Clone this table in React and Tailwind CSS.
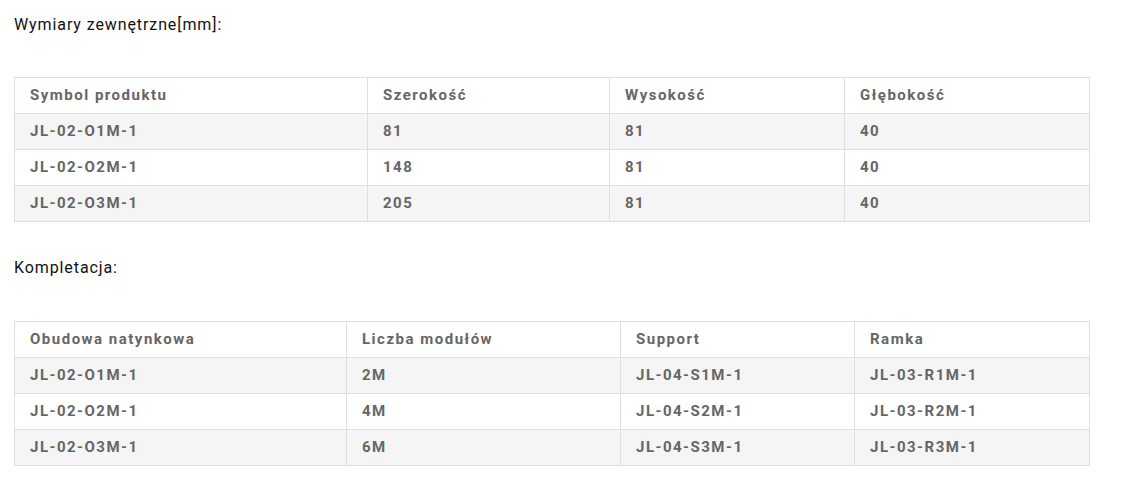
import React from 'react';

const dims = {
  cols: [
    { label: 'Symbol produktu', w: 'w-[353px]' },
    { label: 'Szerokość', w: 'w-[242px]' },
    { label: 'Wysokość', w: 'w-[235px]' },
    { label: 'Głębokość', w: 'w-[245px]' },
  ],
  rows: [
    ['JL-02-O1M-1', '81', '81', '40'],
    ['JL-02-O2M-1', '148', '81', '40'],
    ['JL-02-O3M-1', '205', '81', '40'],
  ],
};

const kit = {
  cols: [
    { label: 'Obudowa natynkowa', w: 'w-[332px]' },
    { label: 'Liczba modułów', w: 'w-[274px]' },
    { label: 'Support', w: 'w-[234px]' },
    { label: 'Ramka', w: 'w-[235px]' },
  ],
  rows: [
    ['JL-02-O1M-1', '2M', 'JL-04-S1M-1', 'JL-03-R1M-1'],
    ['JL-02-O2M-1', '4M', 'JL-04-S2M-1', 'JL-03-R2M-1'],
    ['JL-02-O3M-1', '6M', 'JL-04-S3M-1', 'JL-03-R3M-1'],
  ],
};

const SpecTable = ({ data }) => (
  <table className="w-[1076px] table-fixed border-collapse border border-[#dfdfdf] text-left">
    <thead>
      <tr>
        {data.cols.map((c) => (
          <th
            key={c.label}
            className={`${c.w} border border-[#dfdfdf] px-[15px] py-0 text-[15px] leading-[35px] font-bold tracking-[1.5px] text-[#666]`}
          >
            {c.label}
          </th>
        ))}
      </tr>
    </thead>
    <tbody>
      {data.rows.map((row, i) => (
        <tr key={i} className={i % 2 === 0 ? 'bg-[#f5f5f5]' : 'bg-white'}>
          {row.map((cell, j) => (
            <td
              key={j}
              className="border border-[#dfdfdf] px-[15px] py-0 text-[15px] leading-[35px] font-bold tracking-[1.5px] text-[#666]"
            >
              {cell}
            </td>
          ))}
        </tr>
      ))}
    </tbody>
  </table>
);

export default function App() {
  return (
    <div className="min-h-[495px] bg-white px-[14px] pt-[13px] font-['Roboto',sans-serif]">
      <p className="text-[16px] leading-[24px] tracking-[0.9px] text-[#111]">Wymiary zewnętrzne[mm]:</p>
      <div className="mt-[40px]">
        <SpecTable data={dims} />
      </div>
      <p className="mt-[34px] text-[16px] leading-[24px] tracking-[0.9px] text-[#111]">Kompletacja:</p>
      <div className="mt-[41px]">
        <SpecTable data={kit} />
      </div>
    </div>
  );
}
